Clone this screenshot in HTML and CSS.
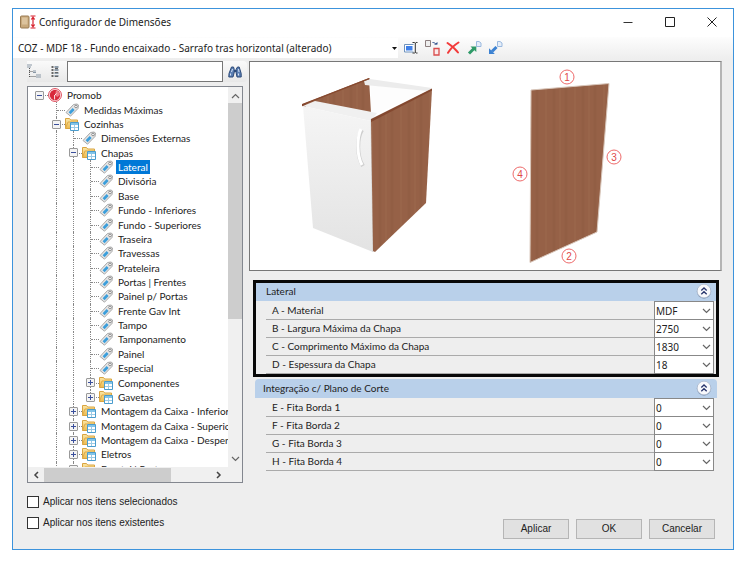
FILE: index.html
```
<!DOCTYPE html>
<html lang="pt-BR">
<head>
    <meta charset="UTF-8">
    <meta name="viewport" content="width=device-width, initial-scale=1.0">
    <title>Configurador de Dimensões</title>
    <link rel="stylesheet" href="styles.css">
</head>
<body>
    <svg class="defs" aria-hidden="true">
        <defs>
            <linearGradient id="folder-fill" x1="0" y1="0" x2="0" y2="1">
                <stop offset="0" stop-color="#fbe7a6"/>
                <stop offset="1" stop-color="#ecba50"/>
            </linearGradient>
            <linearGradient id="door" x1="0" y1="0" x2="0" y2="1">
                <stop offset="0" stop-color="#f5f5f5"/>
                <stop offset="1" stop-color="#e3e3e3"/>
            </linearGradient>
            <pattern id="wood" width="29" height="220" patternUnits="userSpaceOnUse">
                <rect width="29" height="220" fill="#966147"/>
                <path d="M3 0v220M15 0v220" stroke="#925e44" stroke-width="3"/>
                <path d="M9 0v220M24 0v220" stroke="#99654a" stroke-width="2"/>
            </pattern>
            <symbol id="tag" viewBox="0 0 14 14">
                <path d="M1 9.5 8.5 1.5 12 1 13.5 2 13 5.5 5.5 13.2z" fill="#e4e4e4" stroke="#a0a0a0" stroke-width=".9"/>
                <path d="M3.6 9.2 7.6 5 9.6 7 5.6 11.2z" fill="#3b9edb"/>
                <circle cx="11" cy="3.5" r="1.3" fill="#fff" stroke="#777" stroke-width=".8"/>
            </symbol>
            <symbol id="folder" viewBox="0 0 14 14">
                <path d="M.5 11.5V1.5h4l1.2 1.5h6.8v8.5z" fill="url(#folder-fill)" stroke="#d9a441"/>
                <path d="M.5 11.5 3 5h9" fill="none" stroke="#dfab48"/>
                <path d="M5.5 5.5h8v8h-8z" fill="#fff" stroke="#4a9ccd"/>
                <path d="M6 7h7" stroke="#83c4e8" stroke-width="2"/>
                <path d="M9.5 8v5M6 10.5h7" stroke="#9ccbe5"/>
            </symbol>
            <symbol id="promob" viewBox="0 0 14 14">
                <circle cx="7" cy="7" r="6.4" fill="#fff" stroke="#d8283a" stroke-width=".9"/>
                <circle cx="7" cy="7" r="5.2" fill="#d8283a"/>
                <path d="M8 2.5c2.5.4 3.8 2.2 3.8 4.5L9.2 9 7.5 7.6 7.4 5.5z" fill="#ef7b86"/>
                <path d="M6.6 7v4.5M8.5 5.5 6.8 7.2" stroke="#fff" stroke-width=".9"/>
            </symbol>
            <symbol id="chevron" viewBox="0 0 9 6">
                <path d="M1 1 4.5 4.5 8 1" fill="none" stroke="#666" stroke-width="1.2"/>
            </symbol>
            <symbol id="collapse" viewBox="0 0 16 16">
                <circle cx="8" cy="8.5" r="7.2" fill="#8297b4"/>
                <circle cx="8" cy="8" r="6.8" fill="#f8f9fc" stroke="#b1bdd0" stroke-width=".6"/>
                <path d="M5.3 7.5 8 5l2.7 2.5M5.3 11.2 8 8.7l2.7 2.5" fill="none" stroke="#28356c" stroke-width="1.3"/>
            </symbol>
        </defs>
    </svg>

    <main class="window">
        <header class="titlebar">
            <svg class="app-icon" width="16" height="14" viewBox="0 0 16 14">
                <rect x=".5" y="1" width="8.5" height="12" rx="1" fill="#c8a97c" stroke="#9a7b52"/>
                <path d="M2 2.5h5.5v7H2z" fill="#dcc39d"/>
                <path d="M10.5 1h5M10.5 13h5M13 2v10M11.3 4.5 13 2.3l1.7 2.2M11.3 9.5l1.7 2.2 1.7-2.2" fill="none" stroke="#d7232f" stroke-width="1.2"/>
            </svg>
            <h1>Configurador de Dimensões</h1>
            <div class="window-buttons">
                <button type="button" aria-label="Minimizar"><svg width="10" height="10"><path d="M.5 5.5h9" stroke="#333"/></svg></button>
                <button type="button" aria-label="Maximizar"><svg width="10" height="10"><path d="M.5.5h9v9h-9z" fill="none" stroke="#222"/></svg></button>
                <button type="button" aria-label="Fechar"><svg width="10" height="10"><path d="M.5.5l9 9M9.5.5l-9 9" stroke="#222"/></svg></button>
            </div>
        </header>

        <div class="toolbar">
            <div class="config-picker">
                <select aria-label="Configuração">
                    <option>COZ - MDF 18 - Fundo encaixado - Sarrafo tras horizontal (alterado)</option>
                </select>
                <svg width="5" height="3"><path d="M0 0h5L2.500 3z" fill="#111"/></svg>
            </div>
            <button type="button" aria-label="Renomear">
                <svg width="16" height="16" viewBox="0 0 16 16">
                    <path d="M10.500 4.500H1.500v7.500h9" fill="#fff" stroke="#6f93bd"/>
                    <path d="M3 6h6.500v4.500H3z" fill="#3f7fe8"/>
                    <path d="M9.500 2.500h2l.8.7.8-.7h1.400M12.300 3v9.500M9.500 13h2l.8-.7.8.7h1.400" fill="none" stroke="#333"/>
                </svg>
            </button>
            <button type="button" aria-label="Duplicar">
                <svg width="16" height="16" viewBox="0 0 16 16">
                    <path d="M1.500.500h5v6h-5z" fill="#eee" stroke="#8d7f7f"/>
                    <path d="M10 8.500h5v6.500h-5z" fill="#fbeaea" stroke="#d94c4c" stroke-width="1.300"/>
                    <path d="M8.500 2.500c2 0 3 .8 3.600 2.200" fill="none" stroke="#31528d"/>
                    <path d="M10 4.500h3.500V2z" fill="#31528d"/>
                </svg>
            </button>
            <button type="button" aria-label="Excluir">
                <svg width="16" height="16" viewBox="0 0 16 16">
                    <path d="M2.500 3C7 6 10.500 9 13 12.500M13.500 2.500C9.500 5 5.500 8.500 3 12.800" fill="none" stroke="#f23b3b" stroke-width="2" stroke-linecap="round"/>
                </svg>
            </button>
            <button type="button" aria-label="Exportar">
                <svg width="16" height="16" viewBox="0 0 16 16">
                    <path d="M10.500 1.500H13l2 1.500v3.500h-4.500z" fill="#e5eef9" stroke="#9ab9df"/>
                    <path d="M3 13.500 8 8.500" stroke="#2f9a68" stroke-width="3"/>
                    <path d="M4.500 6.500h5.800v5.500z" fill="#2f9a68"/>
                </svg>
            </button>
            <button type="button" aria-label="Importar">
                <svg width="16" height="16" viewBox="0 0 16 16">
                    <path d="M10.500 1.500H13l2 1.500v3.500h-4.500z" fill="#e5eef9" stroke="#9ab9df"/>
                    <path d="M9.500 7 5 11.500" stroke="#3c82d2" stroke-width="3"/>
                    <path d="M2 8.300V14h5.800z" fill="#3c82d2"/>
                </svg>
            </button>
        </div>

        <div class="content">
            <section class="sidebar">
                <div class="search">
                    <button type="button" aria-label="Expandir tudo">
                        <svg width="14" height="15" viewBox="0 0 14 15">
                            <path d="M0 1h5M0 3h4M6 7h3M6 8.500h3M9 11h5M9 13h5" stroke="#8997a5" stroke-width="1.200"/>
                            <path d="M2.500 4v10M2.500 7.500H6M2.500 12.500H9" fill="none" stroke="#555" stroke-dasharray="1 1"/>
                        </svg>
                    </button>
                    <button type="button" aria-label="Recolher tudo">
                        <svg width="8" height="14" viewBox="0 0 8 14">
                            <path d="M1.500 1v12" stroke="#666" stroke-dasharray="2 1" stroke-width="2"/>
                            <path d="M5.500 1v12" stroke="#8b9aa8" stroke-dasharray="2 1" stroke-width="4"/>
                            <path d="M4 3.500h3M4 7.500h3M4 11.500h3" stroke="#666"/>
                        </svg>
                    </button>
                    <input type="text" aria-label="Pesquisar">
                    <button type="button" aria-label="Localizar">
                        <svg width="14" height="12" viewBox="0 0 14 12">
                            <path d="M3.500 1h2l.8 2.500v2.500L5 11H.8L1 7.500zM9.500 1h1.700l2 6.500V11H9L8 6V3.500z" fill="#5b7fb4" stroke="#2d4a78"/>
                            <path d="M6 5h2.500" stroke="#2d4a78" stroke-width="2"/>
                            <path d="M2.500 7.500v2M10.500 7.500v2M4.500 3 3.500 6M10.500 3l.5 3" stroke="#d5e2f5"/>
                        </svg>
                    </button>
                </div>

                <div class="tree-box">
                    <ul class="tree" id="tree"></ul>
                    <div class="scroll-y">
                        <svg class="flip" width="9" height="6"><use href="#chevron"/></svg>
                        <span class="thumb"></span>
                        <svg width="9" height="6"><use href="#chevron"/></svg>
                    </div>
                    <div class="scroll-x">
                        <svg width="6" height="8"><path d="M5 1 2 4l3 3" fill="none" stroke="#444" stroke-width="1.500"/></svg>
                        <span class="thumb"></span>
                        <svg width="6" height="8"><path d="M1 1l3 3-3 3" fill="none" stroke="#444" stroke-width="1.500"/></svg>
                    </div>
                </div>

                <div class="checks">
                    <label><input type="checkbox"> Aplicar nos itens selecionados</label>
                    <label><input type="checkbox"> Aplicar nos itens existentes</label>
                </div>
            </section>

            <section class="details">
                <div class="preview">
                    <svg viewBox="250 62 470 208" role="img" aria-label="Lateral do balcão">
                        <!-- cabinet -->
                        <path d="M303 104 369 78l2 35-56-11-9 4z" fill="url(#wood)"/>
                        <path d="M371 84 430 90 371 116z" fill="#fdfdfd"/>
                        <path d="M364 81 370 79 432 88 427 91 365 85z" fill="#ececec"/>
                        <path d="M302 104 369 78l1 1-64 25v3l-4-1z" fill="#86492f"/>
                        <path d="M303 106 315 101 377 113 371 121z" fill="#f0f0f0"/>
                        <path d="M303 106 371 121 373 252 313 228z" fill="url(#door)"/>
                        <path d="M371 119v3l2 130" fill="none" stroke="#d4d4d4"/>
                        <path d="M371 120 432 89 426 203 375 252 373 251z" fill="url(#wood)"/>
                        <path d="M371 119 432 88.500v2L371 122z" fill="#83482f"/>
                        <path d="M362 130c-5 8-5.500 26 1 36" fill="none" stroke="#cfcfcf" stroke-width="4"/>
                        <path d="M361 129c-4 8-4.500 26 1 36" fill="none" stroke="#fff" stroke-width="3"/>
                        <!-- side panel -->
                        <path d="M531 90 609 83.500 597 232 530 262.500z" fill="url(#wood)" stroke="#d8c6ba"/>
                        <g class="marker">
                            <circle cx="567" cy="77" r="7"/><text x="567" y="81">1</text>
                            <circle cx="569" cy="256" r="7"/><text x="569" y="260">2</text>
                            <circle cx="614" cy="157" r="7"/><text x="614" y="161">3</text>
                            <circle cx="520" cy="174" r="7"/><text x="520" y="178">4</text>
                        </g>
                    </svg>
                </div>

                <div class="group highlighted">
                    <h2>Lateral <button type="button" aria-label="Recolher Lateral"><svg width="16" height="16"><use href="#collapse"/></svg></button></h2>
                    <div class="field">
                        <label for="material">A - Material</label>
                        <span class="drop"><select id="material"><option>MDF</option></select><svg width="9" height="6"><use href="#chevron"/></svg></span>
                    </div>
                    <div class="field">
                        <label for="largura">B - Largura Máxima da Chapa</label>
                        <span class="drop"><select id="largura"><option>2750</option></select><svg width="9" height="6"><use href="#chevron"/></svg></span>
                    </div>
                    <div class="field">
                        <label for="comprimento">C - Comprimento Máximo da Chapa</label>
                        <span class="drop"><select id="comprimento"><option>1830</option></select><svg width="9" height="6"><use href="#chevron"/></svg></span>
                    </div>
                    <div class="field">
                        <label for="espessura">D - Espessura da Chapa</label>
                        <span class="drop"><select id="espessura"><option>18</option></select><svg width="9" height="6"><use href="#chevron"/></svg></span>
                    </div>
                </div>

                <div class="group">
                    <h2>Integração c/ Plano de Corte <button type="button" aria-label="Recolher Integração"><svg width="16" height="16"><use href="#collapse"/></svg></button></h2>
                    <div class="field">
                        <label for="fita1">E - Fita Borda 1</label>
                        <span class="drop"><select id="fita1"><option>0</option></select><svg width="9" height="6"><use href="#chevron"/></svg></span>
                    </div>
                    <div class="field">
                        <label for="fita2">F - Fita Borda 2</label>
                        <span class="drop"><select id="fita2"><option>0</option></select><svg width="9" height="6"><use href="#chevron"/></svg></span>
                    </div>
                    <div class="field">
                        <label for="fita3">G - Fita Borda 3</label>
                        <span class="drop"><select id="fita3"><option>0</option></select><svg width="9" height="6"><use href="#chevron"/></svg></span>
                    </div>
                    <div class="field">
                        <label for="fita4">H - Fita Borda 4</label>
                        <span class="drop"><select id="fita4"><option>0</option></select><svg width="9" height="6"><use href="#chevron"/></svg></span>
                    </div>
                </div>

                <div class="actions">
                    <button type="button">Aplicar</button>
                    <button type="button">OK</button>
                    <button type="button">Cancelar</button>
                </div>
            </section>
        </div>
    </main>

    <script>
        // one letter per level: l = line, t = branch, s = root node,
        // m = open node, p = closed node, q = last closed node
        const nodes = [
            ['s', 'promob', 'Promob'],
            [' t', 'tag', 'Medidas Máximas'],
            [' m', 'folder', 'Cozinhas'],
            [' lt', 'tag', 'Dimensões Externas'],
            [' lm', 'folder', 'Chapas'],
            [' llt', 'tag', 'Lateral'],
            [' llt', 'tag', 'Divisória'],
            [' llt', 'tag', 'Base'],
            [' llt', 'tag', 'Fundo - Inferiores'],
            [' llt', 'tag', 'Fundo - Superiores'],
            [' llt', 'tag', 'Traseira'],
            [' llt', 'tag', 'Travessas'],
            [' llt', 'tag', 'Prateleira'],
            [' llt', 'tag', 'Portas | Frentes'],
            [' llt', 'tag', 'Painel p/ Portas'],
            [' llt', 'tag', 'Frente Gav Int'],
            [' llt', 'tag', 'Tampo'],
            [' llt', 'tag', 'Tamponamento'],
            [' llt', 'tag', 'Painel'],
            [' llt', 'tag', 'Especial'],
            [' llp', 'folder', 'Componentes'],
            [' llq', 'folder', 'Gavetas'],
            [' lp', 'folder', 'Montagem da Caixa - Inferior'],
            [' lp', 'folder', 'Montagem da Caixa - Superio'],
            [' lp', 'folder', 'Montagem da Caixa - Despen'],
            [' lp', 'folder', 'Eletros'],
            [' lp', 'folder', 'Frontal | Portas']
        ];
        const guides = {
            ' ': '<i class="guide"></i>',
            l: '<i class="guide line"></i>',
            t: '<i class="guide line branch"></i>',
            s: '<i class="guide branch"><b class="minus"></b></i>',
            m: '<i class="guide line branch"><b class="minus"></b></i>',
            p: '<i class="guide line branch"><b class="minus plus"></b></i>',
            q: '<i class="guide line last branch"><b class="minus plus"></b></i>'
        };

        document.getElementById('tree').innerHTML = nodes.map(([path, icon, text]) => `
            <li>${[...path].map(c => guides[c]).join('')}<svg width="14" height="14"><use href="#${icon}"/></svg><span class="${text === 'Lateral' ? 'selected' : ''}">${text}</span></li>`).join('');
    </script>
</body>
</html>
```

FILE: styles.css
```
* {
    box-sizing: border-box;
}

body {
    margin: 0;
    padding: 8px 19px 12px 12px;
    background: #fff;
    color: #222;
    font-family: Lato, "Liberation Sans", Arial, sans-serif;
    font-size: 10px;
    line-height: 14px;
}

button, input, select {
    margin: 0;
    padding: 0;
    border: none;
    border-radius: 0;
    background: none;
    color: inherit;
    font: inherit;
}

svg {
    display: block;
    flex: none;
}

.defs {
    position: absolute;
    width: 0;
    height: 0;
}

.window {
    border: 1px solid #3c93dc;
    background: #eee;
}

/* title and toolbar */

.titlebar {
    display: flex;
    align-items: center;
    height: 28px;
    padding: 0 16px 2px 7px;
    background: #fff;
}

h1 {
    margin: 0 auto 0 3px;
    font: 10px/14px "Noto Sans", "Open Sans", sans-serif;
}

.window-buttons {
    display: flex;
    gap: 32px;
}

.toolbar {
    display: flex;
    align-items: center;
    gap: 5px;
    height: 22px;
    background: linear-gradient(#fdfdfd, #eee);
}

.config-picker {
    position: relative;
    width: 385px;
    height: 20px;
    background: #fff;
}

.config-picker select {
    width: 100%;
    height: 20px;
    padding-left: 5px;
    appearance: none;
    font: 10px/20px "Noto Sans", "Open Sans", sans-serif;
}

.config-picker svg {
    position: absolute;
    right: 1px;
    top: 9px;
    pointer-events: none;
}

/* body */

.content {
    display: grid;
    grid-template-columns: 216px 1fr;
    gap: 6px;
    padding: 2px 11px 10px 14px;
}

.search {
    display: flex;
    align-items: center;
    height: 21px;
    margin: 0 -4px 4px 0;
    border-radius: 0 4px 4px 0;
    background: linear-gradient(#fafafa, #e8e8e8);
}

.search button + button {
    margin-left: 10px;
}

.search input {
    flex: 1;
    height: 21px;
    margin: 0 5px 0 8px;
    border: 1px solid #777;
    background: #fff;
}

.search input + button {
    margin-right: 5px;
}

.tree-box {
    display: grid;
    grid-template-columns: 1fr 14px;
    grid-template-rows: 380px 15px;
    border: 1px solid #83878f;
    background: #fff;
}

.tree {
    display: grid;
    grid-template-rows: repeat(27, 1fr);
    height: 389px;
    margin: 0;
    padding: 1px 0 0;
    list-style: none;
    overflow: hidden;
    clip-path: inset(0 0 9px);
}

.tree li {
    display: flex;
    align-items: center;
    min-width: 0;
    padding-left: 3px;
    white-space: nowrap;
}

.tree span {
    margin-left: 3px;
    padding: 0 2px;
    line-height: 14px;
}

.tree .selected {
    background: #0078d7;
    color: #fff;
}

.guide {
    position: relative;
    flex: none;
    align-self: stretch;
    width: 17px;
}

.guide.line::before {
    content: "";
    position: absolute;
    top: 0;
    bottom: 0;
    left: 8px;
    border-left: 1px dotted #888;
}

.guide.last::before {
    bottom: 50%;
}

.guide.branch::after {
    content: "";
    position: absolute;
    top: 50%;
    left: 9px;
    right: 0;
    border-top: 1px dotted #888;
}

.minus {
    position: absolute;
    z-index: 1;
    top: 3px;
    left: 4px;
    width: 9px;
    height: 9px;
    border: 1px solid #999;
    border-radius: 1px;
    background: linear-gradient(#3a4f9c, #3a4f9c) center / 5px 1px no-repeat #f4f4f4;
}

.plus {
    background: linear-gradient(#3a4f9c, #3a4f9c) center / 5px 1px no-repeat,
        linear-gradient(#3a4f9c, #3a4f9c) center / 1px 5px no-repeat #f4f4f4;
}

.scroll-y, .scroll-x {
    display: flex;
    align-items: center;
    background: #f0f0f0;
}

.scroll-y {
    flex-direction: column;
    padding: 6px 0 5px;
}

.scroll-x {
    grid-column: 1 / 3;
    z-index: 1;
    padding: 0 20px 0 5px;
}

.flip {
    transform: rotate(180deg);
}

.thumb {
    background: #cdcdcd;
}

.scroll-y .thumb {
    width: 14px;
    height: 216px;
    margin: 4px 0 auto;
}

.scroll-x .thumb {
    width: 127px;
    height: 14px;
    margin: 0 auto 0 5px;
}

.checks {
    display: grid;
    gap: 7px;
    margin-top: 12px;
    font: 10px/14px "Liberation Sans", Arial, sans-serif;
}

.checks label {
    display: flex;
    align-items: center;
    gap: 4px;
}

.checks input {
    width: 12px;
    height: 12px;
    border: 1px solid #333;
    background: #fff;
    appearance: none;
}

/* right side */

.preview {
    margin-bottom: 9px;
    border: 1px solid #777;
    border-right: 2px solid #b5b5b5;
    background: #fff;
}

.preview svg {
    width: 100%;
}

.marker circle {
    fill: #fff;
    stroke: #ee6a6a;
}

.marker text {
    fill: #e04848;
    font: 10px "Liberation Sans", Arial, sans-serif;
    text-anchor: middle;
}

.group {
    margin: 2px 5px 0 6px;
}

.group.highlighted {
    margin: 0 3px 0 4px;
    border: 3px solid #080808;
}

h2 {
    display: flex;
    align-items: center;
    justify-content: space-between;
    height: 19px;
    margin: 0 0 1px;
    padding: 0 5px 2px 8px;
    border-radius: 4px 4px 0 0;
    background: #b9d0ea;
    font-size: 10px;
    font-weight: normal;
}

.highlighted h2 {
    height: 18px;
    padding: 0 4px 2px 10px;
    border-radius: 0;
}

.field {
    display: flex;
    height: 18px;
    margin: 0 3px 0 11px;
}

.highlighted .field {
    margin: 0 2px 0 10px;
}

.field label {
    flex: 1;
    padding: 1px 0 0 6px;
    border-bottom: 1px solid #aaa;
}

.drop {
    position: relative;
    width: 60px;
    height: 19px;
    margin-top: -1px;
}

.drop select {
    width: 100%;
    height: 19px;
    padding: 0 1px;
    border: 1px solid #888;
    background: #fff;
    appearance: none;
    font: 10px/16px "Noto Sans", "Open Sans", sans-serif;
}

.drop svg {
    position: absolute;
    top: 7px;
    right: 3px;
    pointer-events: none;
}

.actions {
    display: flex;
    justify-content: flex-end;
    gap: 7px;
    margin: 48px 7px 0 0;
}

.actions button {
    width: 66px;
    height: 20px;
    border: 1px solid #b5b5b5;
    background: #e1e1e1;
    font: 10px/14px "Liberation Sans", Arial, sans-serif;
}
```
